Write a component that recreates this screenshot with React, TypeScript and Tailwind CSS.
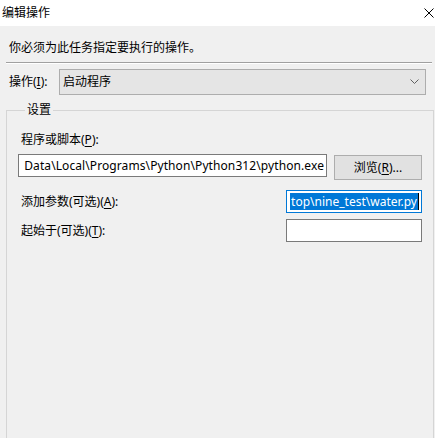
import { ReactNode } from 'react';

function Key({ children }: { children: ReactNode }) {
  return <span className="underline underline-offset-[2px]">{children}</span>;
}

function TextBox({ children, focused }: { children?: ReactNode; focused?: boolean }) {
  return (
    <div
      className={`flex h-[23px] min-w-0 items-center justify-end overflow-hidden whitespace-nowrap bg-white px-[2px] ${
        focused ? 'border border-[#0078d7]' : 'border border-[#7a7a7a]'
      }`}
    >
      {children}
    </div>
  );
}

export default function App() {
  return (
    <div className="h-[438px] w-[435px] overflow-hidden bg-[#f0f0f0] font-[family-name:'Noto_Sans','Noto_Sans_CJK_SC',sans-serif] text-[12px] leading-[16px] text-black">
      {/* title bar */}
      <div className="flex h-[26px] items-center justify-between bg-white pl-[2px] pr-[1px]">
        <span>编辑操作</span>
        <svg width="10" height="10" viewBox="0 0 10 10" className="mb-[1px]">
          <path d="M0.5 0.5 L9.5 9.5 M9.5 0.5 L0.5 9.5" stroke="#000" strokeWidth="1" />
        </svg>
      </div>

      <div className="pl-[6px] pr-[1px]">
        <p className="mt-[14px] pl-[3px]">你必须为此任务指定要执行的操作。</p>
        <div className="mt-[6px] mr-[2px] border-t border-b border-t-[#a0a0a0] border-b-white" />

        <div className="mt-[5px] flex items-center pl-[3px]">
          <span className="w-[50px]">
            操作(<Key>I</Key>):
          </span>
          <div className="flex h-[26px] w-[367px] items-center justify-between border border-[#adadad] bg-[#e5e5e5] pl-[3px] pr-[6px]">
            <span>启动程序</span>
            <svg width="9" height="6" viewBox="0 0 9 6">
              <path d="M0.5 0.5 L4.5 4.5 L8.5 0.5" fill="none" stroke="#606060" strokeWidth="1" />
            </svg>
          </div>
        </div>

        <fieldset className="mt-[7px] h-[340px] w-[428px] min-w-0 border border-[#d5d5d5] pl-[11px] pr-[11px]">
          <legend className="ml-[7px] px-[2px]">设置</legend>

          <p className="mt-[14px] pl-[3px]">
            程序或脚本(<Key>P</Key>):
          </p>
          <div className="mt-[6px] flex items-start gap-[7px]">
            <div className="min-w-0 flex-1">
              <TextBox>
                <span className="tracking-[0.09px]">Data\Local\Programs\Python\Python312\python.exe</span>
              </TextBox>
            </div>
            <button className="mt-[1px] h-[25px] w-[88px] shrink-0 border border-[#adadad] bg-[#e1e1e1]">
              浏览(<Key>R</Key>)...
            </button>
          </div>

          <div className="mt-[10px] flex items-center">
            <span className="min-w-0 flex-1 pl-[3px]">
              添加参数(可选)(<Key>A</Key>):
            </span>
            <div className="w-[136px] shrink-0">
              <TextBox focused>
                <span className="flex items-center">
                  <span className="bg-[#0078d7] px-[1px] leading-[17px] text-white">top\nine_test\water.py</span>
                  <span className="h-[17px] w-[1px] bg-black" />
                </span>
              </TextBox>
            </div>
          </div>

          <div className="mt-[6px] flex items-center">
            <span className="min-w-0 flex-1 pl-[3px]">
              起始于(可选)(<Key>T</Key>):
            </span>
            <div className="w-[136px] shrink-0">
              <TextBox />
            </div>
          </div>
        </fieldset>
      </div>
    </div>
  );
}
